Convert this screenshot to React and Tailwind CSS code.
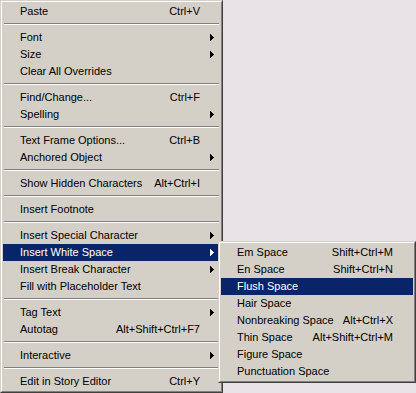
const FONT = { fontFamily: '"Liberation Sans", Arial, sans-serif' }

const MAIN = [
  { label: 'Paste', key: 'Ctrl+V' },
  'sep',
  { label: 'Font', sub: true },
  { label: 'Size', sub: true },
  { label: 'Clear All Overrides' },
  'sep',
  { label: 'Find/Change...', key: 'Ctrl+F' },
  { label: 'Spelling', sub: true },
  'sep',
  { label: 'Text Frame Options...', key: 'Ctrl+B' },
  { label: 'Anchored Object', sub: true },
  'sep',
  { label: 'Show Hidden Characters', key: 'Alt+Ctrl+I' },
  'sep',
  { label: 'Insert Footnote' },
  'sep',
  { label: 'Insert Special Character', sub: true },
  { label: 'Insert White Space', sub: true, active: true },
  { label: 'Insert Break Character', sub: true },
  { label: 'Fill with Placeholder Text' },
  'sep',
  { label: 'Tag Text', sub: true },
  { label: 'Autotag', key: 'Alt+Shift+Ctrl+F7' },
  'sep',
  { label: 'Interactive', sub: true },
  'sep',
  { label: 'Edit in Story Editor', key: 'Ctrl+Y' },
]

const SPACES = [
  { label: 'Em Space', key: 'Shift+Ctrl+M' },
  { label: 'En Space', key: 'Shift+Ctrl+N' },
  { label: 'Flush Space', active: true },
  { label: 'Hair Space' },
  { label: 'Nonbreaking Space', key: 'Alt+Ctrl+X' },
  { label: 'Thin Space', key: 'Alt+Shift+Ctrl+M' },
  { label: 'Figure Space' },
  { label: 'Punctuation Space' },
]

function Arrow({ color }) {
  return (
    <svg width="4" height="7" viewBox="0 0 4 7" shapeRendering="crispEdges">
      <polygon points="0,0 4,3.5 0,7" fill={color} />
    </svg>
  )
}

function Item({ item, indent }) {
  const on = item.active
  return (
    <div
      className={`flex h-[17px] items-center text-[11px] leading-none ${indent} ${
        on ? 'bg-[#0a246a] text-white' : 'text-black'
      }`}
    >
      <span className="flex-1 whitespace-nowrap">{item.label}</span>
      {item.key && <span className="whitespace-nowrap">{item.key}</span>}
      <span className="flex w-[20px] shrink-0 items-center pl-[10px]">
        {item.sub && <Arrow color={on ? '#ffffff' : '#000000'} />}
      </span>
    </div>
  )
}

function Frame({ children, className }) {
  return (
    <div
      className={`border border-t-[#d4d0c8] border-l-[#d4d0c8] border-r-[#404040] border-b-[#404040] bg-[#d4d0c8] ${className}`}
    >
      <div className="border border-t-white border-l-white border-r-[#808080] border-b-[#808080] p-[1px]">
        {children}
      </div>
    </div>
  )
}

export default function App() {
  return (
    <div className="relative h-[393px] w-[416px] overflow-hidden bg-[#e7e3e7]" style={FONT}>
      <Frame className="w-[223px]">
        {MAIN.map((m, i) =>
          m === 'sep' ? (
            <div key={i} className="h-[9px] px-[1px] pt-[3px]">
              <div className="border-t border-b border-t-[#808080] border-b-white" />
            </div>
          ) : (
            <Item key={i} item={m} indent="pl-[17px]" />
          )
        )}
      </Frame>

      {/* Insert White Space submenu */}
      <Frame className="absolute left-[218px] top-[241px] w-[198px]">
        {SPACES.map((m, i) => (
          <Item key={i} item={m} indent="pl-[16px]" />
        ))}
      </Frame>
    </div>
  )
}
